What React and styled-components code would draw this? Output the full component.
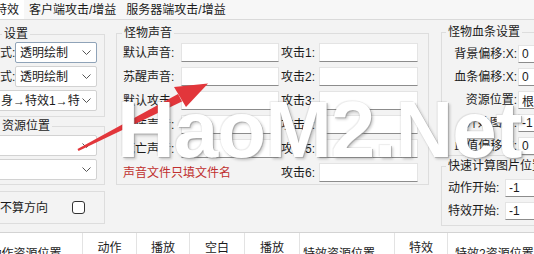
import React from 'react';
import styled, { createGlobalStyle } from 'styled-components';

const GlobalStyle = createGlobalStyle`
  html, body {
    margin: 0;
    padding: 0;
    background: #f3f3f3;
  }
  body {
    font-family: "Liberation Sans", "Noto Sans CJK SC", sans-serif;
    font-size: 12px;
    color: #1b1b1b;
  }
`;

const Page = styled.div`
    position: relative;
    width: 534px;
    height: 254px;
    overflow: hidden;
    background: #f3f3f3;
`;

const TabStrip = styled.div`
    display: flex;
    height: 19px;
    margin-left: -10px;
    border-bottom: 1px solid #dadada;
    background: #f7f7f7;
`;

const Tab = styled.div`
    padding: 1px 5px 0;
    line-height: 18px;
    white-space: nowrap;
    background: ${(props) => (props.$active ? '#ffffff' : 'transparent')};
`;

const Panel = styled.div`
    display: flex;
    align-items: flex-start;
    height: 212px;
    margin-left: -6px;
`;

const Column = styled.div`
    display: flex;
    flex-direction: column;
    flex-shrink: 0;
    width: ${(props) => props.$w}px;
    margin-top: ${(props) => props.$mt}px;
    margin-right: ${(props) => props.$mr || 0}px;
`;

const Group = styled.fieldset`
    margin: ${(props) => props.$mt || 0}px 0 0;
    padding: ${(props) => props.$pad};
    min-width: 0;
    border: 1px solid #dddddd;
    border-radius: 0;
    height: ${(props) => (props.$h ? `${props.$h}px` : 'auto')};
    box-sizing: border-box;
`;

const Legend = styled.legend`
    padding: 0 2px;
    margin-left: ${(props) => props.$ml || 0}px;
    font-size: 12px;
    line-height: 14px;
    white-space: nowrap;
`;

const Stack = styled.div`
    display: flex;
    flex-direction: column;
    gap: ${(props) => props.$gap}px;
`;

const Row = styled.div`
    display: flex;
    align-items: center;
    height: ${(props) => props.$h || 21}px;
    white-space: nowrap;
`;

const Label = styled.span`
    flex-shrink: 0;
    width: ${(props) => props.$w}px;
    text-align: ${(props) => props.$align || 'left'};
    padding-left: ${(props) => props.$pl || 0}px;
    box-sizing: border-box;
    line-height: 14px;
    color: ${(props) => props.$color || 'inherit'};
    white-space: nowrap;
`;

const Combo = styled.div`
    display: flex;
    align-items: center;
    box-sizing: border-box;
    flex-shrink: 0;
    width: ${(props) => props.$w}px;
    height: 21px;
    margin-left: ${(props) => props.$ml || 0}px;
    padding: 0 5px 0 4px;
    background: #ffffff;
    border: 1px solid ${(props) => (props.$focus ? '#8fa3b8' : '#d2d2d2')};
    border-radius: 2px;
`;

const ComboText = styled.span`
    flex: 1;
    overflow: hidden;
    white-space: nowrap;
    line-height: 14px;
`;

const TextBox = styled.input`
    box-sizing: border-box;
    flex-shrink: 0;
    width: ${(props) => props.$w}px;
    height: ${(props) => props.$h || 19}px;
    margin: 0;
    padding: 0 3px;
    border: 1px solid #e4e4e4;
    border-bottom-color: #8c8c8c;
    border-radius: 0;
    background: #ffffff;
    font: 12px "Liberation Sans", "Noto Sans CJK SC", sans-serif;
    color: #1b1b1b;
    outline: none;
`;

const SoundGrid = styled.div`
    display: grid;
    grid-template-columns: 59px 98px 40px 99px;
    grid-auto-rows: 19px;
    row-gap: 5px;
    align-items: center;
`;

const Check = styled.input`
    appearance: none;
    box-sizing: border-box;
    width: 13px;
    height: 13px;
    margin: 0;
    border: 1px solid #333333;
    border-radius: 3px;
    background: #ffffff;
`;

const HeaderRow = styled.div`
    display: flex;
    height: 22px;
    margin-left: -31px;
    border-top: 1px solid #d3d3d3;
    background: #ffffff;
`;

const HeaderCell = styled.div`
    flex-shrink: 0;
    box-sizing: border-box;
    width: ${(props) => props.$w}px;
    padding-top: ${(props) => props.$top}px;
    padding-left: ${(props) => props.$pl || 0}px;
    text-align: ${(props) => props.$align};
    border-right: 1px solid #e3e3e3;
    line-height: 14px;
    white-space: nowrap;
`;

const Overlay = styled.svg`
    position: absolute;
    left: 0;
    top: 0;
    pointer-events: none;
`;

const Watermark = styled.div`
    position: absolute;
    left: 117px;
    top: 90px;
    font-family: "Liberation Sans", sans-serif;
    font-weight: bold;
    font-size: 80px;
    line-height: 80px;
    letter-spacing: -1px;
    color: #ffffff;
    text-shadow: 1px 1px 0 rgba(150, 150, 150, 0.55), 2px 2px 3px rgba(0, 0, 0, 0.22),
        -1px -1px 1px rgba(0, 0, 0, 0.08);
    white-space: nowrap;
    pointer-events: none;
`;

const Chevron = () => (
    <svg width="9" height="5" viewBox="0 0 9 5">
        <polyline points="0.5,0.5 4.5,4.5 8.5,0.5" fill="none" stroke="#555" strokeWidth="1" />
    </svg>
);

const sounds = [
    ['默认声音:', '攻击1:'],
    ['苏醒声音:', '攻击2:'],
    ['默认攻击:', '攻击3:'],
    ['受伤声音:', '攻击4:'],
    ['死亡声音:', '攻击5:'],
];

const barRows = [
    { label: '背景偏移:X:', value: '0' },
    { label: '血条偏移:X:', value: '0' },
    { label: '资源位置:', value: '根目录' },
    { label: '开始图片:', value: '-1' },
    { label: '血值偏移:X:', value: '0' },
];

const headers = [
    { text: '动作资源位置', w: 114, top: 14, align: 'center' },
    { text: '动作', w: 54, top: 8, align: 'center' },
    { text: '播放', w: 53, top: 8, align: 'center' },
    { text: '空白', w: 55, top: 8, align: 'center' },
    { text: '播放', w: 55, top: 8, align: 'center' },
    { text: '特效资源位置', w: 95, top: 14, align: 'left', pl: 3 },
    { text: '特效', w: 53, top: 8, align: 'center' },
    { text: '特效2资源位置', w: 130, top: 14, align: 'left', pl: 7 },
];

const App = () => {
    return (
        <Page>
            <GlobalStyle />
            <TabStrip>
                <Tab $active>特效</Tab>
                <Tab>客户端攻击/增益</Tab>
                <Tab>服务器端攻击/增益</Tab>
            </TabStrip>

            <Panel>
                {/* 左侧：绘制设置 */}
                <Column $w={111} $mt={7} $mr={11}>
                    <Group $pad="1px 0 5px 5px">
                        <Legend $ml={2}>设置</Legend>
                        <Stack $gap={3}>
                            <Row>
                                <Label $w={15}>式:</Label>
                                <Combo $w={82} $focus>
                                    <ComboText>透明绘制</ComboText>
                                    <Chevron />
                                </Combo>
                            </Row>
                            <Row>
                                <Label $w={15}>式:</Label>
                                <Combo $w={82}>
                                    <ComboText>透明绘制</ComboText>
                                    <Chevron />
                                </Combo>
                            </Row>
                            <Row>
                                <Combo $w={102} $ml={-5}>
                                    <ComboText style={{ marginLeft: 1 }}>身→特效1→特</ComboText>
                                    <Chevron />
                                </Combo>
                            </Row>
                        </Stack>
                    </Group>
                    <Group $mt={2} $pad="2px 0 4px 5px">
                        <Legend>资源位置</Legend>
                        <Stack $gap={3}>
                            <Row>
                                <Combo $w={102} $ml={-5}>
                                    <ComboText />
                                    <Chevron />
                                </Combo>
                            </Row>
                            <Row>
                                <Combo $w={102} $ml={-5}>
                                    <ComboText />
                                    <Chevron />
                                </Combo>
                            </Row>
                        </Stack>
                    </Group>
                    <Group $mt={6} $h={33} $pad="0 0 0 5px">
                        <Row $h={31}>
                            <Label $w={72}>不算方向</Label>
                            <Check type="checkbox" readOnly />
                        </Row>
                    </Group>
                </Column>

                {/* 中间：怪物声音 */}
                <Column $w={313} $mt={6} $mr={12}>
                    <Group $pad="3px 0 2px 5px">
                        <Legend>怪物声音</Legend>
                        <SoundGrid>
                            {sounds.map(([a, b]) => (
                                <React.Fragment key={a}>
                                    <Label $w={59} $pl={1}>{a}</Label>
                                    <TextBox $w={98} readOnly value="" />
                                    <Label $w={40} $pl={2}>{b}</Label>
                                    <TextBox $w={99} readOnly value="" />
                                </React.Fragment>
                            ))}
                            <Label $w={157} $pl={1} $color="#c0302e" style={{ gridColumn: 'span 2' }}>
                                声音文件只填文件名
                            </Label>
                            <Label $w={40} $pl={2}>攻击6:</Label>
                            <TextBox $w={99} readOnly value="" />
                        </SoundGrid>
                    </Group>
                </Column>

                {/* 右侧：血条设置 */}
                <Column $w={120} $mt={5}>
                    <Group $pad="6px 0 0 4px">
                        <Legend>怪物血条设置</Legend>
                        <Stack $gap={5}>
                            {barRows.map((r) => (
                                <Row key={r.label} $h={18}>
                                    <Label $w={71} $align="right">{r.label}</Label>
                                    <TextBox $w={44} $h={18} style={{ marginLeft: 1 }} readOnly value={r.value} />
                                </Row>
                            ))}
                        </Stack>
                    </Group>
                    <Group $mt={3} $pad="6px 0 5px 4px">
                        <Legend>快速计算图片位置</Legend>
                        <Stack $gap={5}>
                            <Row $h={18}>
                                <Label $w={59} $pl={2}>动作开始:</Label>
                                <TextBox $w={50} $h={18} readOnly value="-1" />
                            </Row>
                            <Row $h={18}>
                                <Label $w={59} $pl={2}>特效开始:</Label>
                                <TextBox $w={50} $h={18} readOnly value="-1" />
                            </Row>
                        </Stack>
                    </Group>
                </Column>
            </Panel>

            <HeaderRow>
                {headers.map((h, i) => (
                    <HeaderCell key={`header-${i}`} $w={h.w} $top={h.top} $align={h.align} $pl={h.pl}>
                        {h.text}
                    </HeaderCell>
                ))}
            </HeaderRow>

            {/* 图片上的红色箭头与水印 */}
            <Overlay width="534" height="254" viewBox="0 0 534 254">
                <polygon points="77.5,149 178,94 182,101.5 78.5,151" fill="#e2363b" />
                <polygon points="208,83.5 186,107 174,87" fill="#e2363b" />
            </Overlay>
            <Watermark>HaoM2.Net</Watermark>
        </Page>
    );
};

export default App;
